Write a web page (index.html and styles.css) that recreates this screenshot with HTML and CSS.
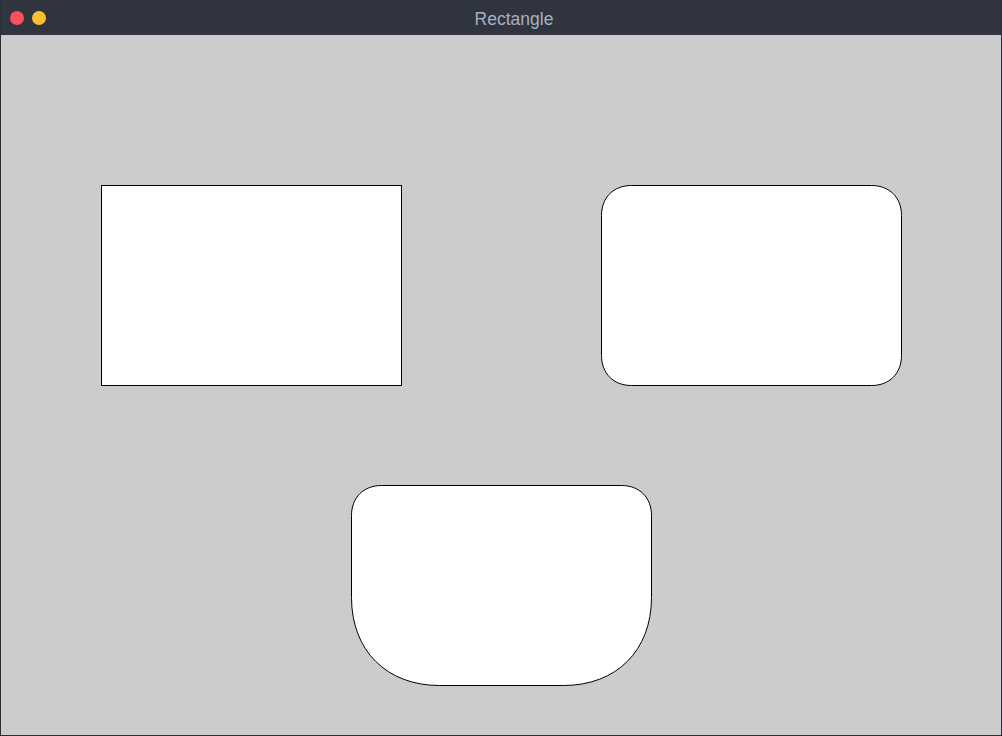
FILE: index.html
```html
<!DOCTYPE html>
<html>
<head>
<meta charset="utf-8">
<title>Rectangle</title>
<link rel="stylesheet" href="styles.css">
</head>
<body>
<div class="window">
  <div class="titlebar">
    <div class="buttons">
      <span class="btn close"></span>
      <span class="btn minimize"></span>
    </div>
    <div class="title">Rectangle</div>
  </div>
  <div class="canvas">
    <svg width="1000" height="700" viewBox="0 0 1000 700" xmlns="http://www.w3.org/2000/svg">
      <g transform="translate(0.5,0.5)" fill="#ffffff" stroke="#000000" stroke-width="1">
        <rect x="100" y="150" width="300" height="200"/>
        <path d="M630 150 L870 150 C888 150 900 162 900 180 L900 320 C900 338 888 350 870 350 L630 350 C612 350 600 338 600 320 L600 180 C600 162 612 150 630 150 Z"/>
        <path d="M380 450 L620 450 C638 450 650 462 650 480 L650 562 C650 615 615 650 562 650 L438 650 C385 650 350 615 350 562 L350 480 C350 462 362 450 380 450 Z"/>
      </g>
    </svg>
  </div>
</div>
</body>
</html>
```
FILE: styles.css
```css
html, body {
  margin: 0;
  padding: 0;
  background: #2f343f;
}
.window {
  width: 1002px;
  height: 736px;
  box-sizing: border-box;
  border: 1px solid #2a2e38;
  border-top: none;
  display: flex;
  flex-direction: column;
  background: #2f343f;
}
.titlebar {
  position: relative;
  height: 35px;
  flex: 0 0 35px;
  background: #2f343f;
  display: flex;
  align-items: center;
  justify-content: center;
}
.buttons {
  position: absolute;
  left: 9px;
  top: 11px;
  display: flex;
  gap: 8px;
}
.btn {
  display: block;
  width: 14px;
  height: 14px;
  border-radius: 50%;
}
.close { background: #fa4f5d; }
.minimize { background: #fcc02f; }
.title {
  font-family: "Liberation Sans", Arial, sans-serif;
  font-size: 17.5px;
  color: #a8b0bf;
  margin-left: 26px;
  margin-top: 4px;
}
.canvas {
  width: 1000px;
  height: 700px;
  background: #cccccc;
  overflow: hidden;
}
.canvas svg {
  display: block;
}
```
